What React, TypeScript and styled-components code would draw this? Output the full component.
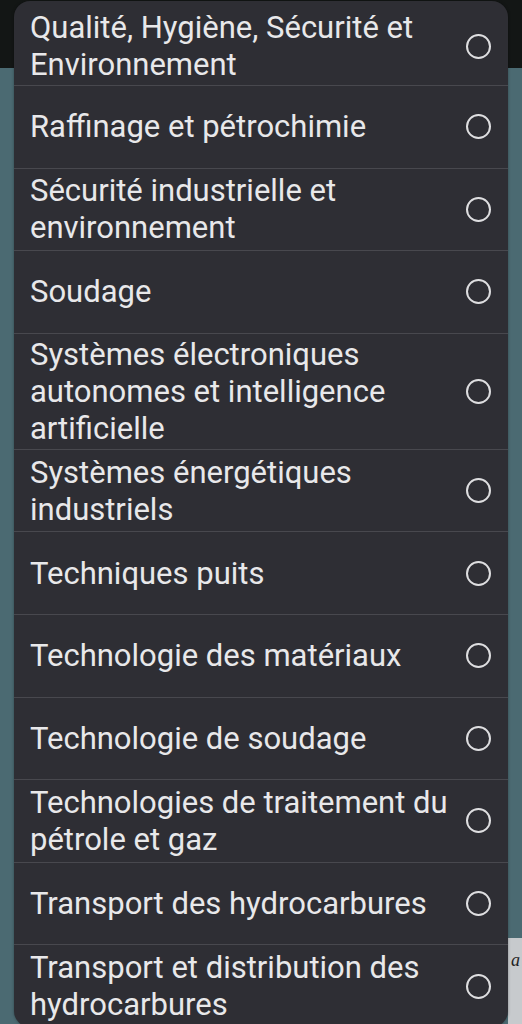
import React from "react";
import styled, { createGlobalStyle } from "styled-components";

const Global = createGlobalStyle`
  html, body { margin: 0; padding: 0; }
  body {
    width: 522px;
    height: 1024px;
    overflow: hidden;
    font-family: Roboto, "Noto Sans", "Liberation Sans", sans-serif;
    background:
      linear-gradient(#131615, #131615) left top / 100% 68px no-repeat,
      linear-gradient(#c7cacd, #c7cacd) right bottom / 14px 86px no-repeat,
      #4b6a72;
  }
`;

const Page = styled.div`
  position: relative;
  width: 522px;
  height: 1024px;
  padding: 1px 14px 0 14px;
  box-sizing: border-box;
`;

const Panel = styled.ul`
  list-style: none;
  margin: 0;
  padding: 0;
  background: #2e2e34;
  border-radius: 16px;
  overflow: hidden;
  box-shadow: 0 0 3px rgba(0, 0, 0, 0.35);
`;

const Row = styled.li<{ $first?: boolean }>`
  display: flex;
  align-items: center;
  justify-content: space-between;
  min-height: ${(p) => (p.$first ? "84px" : "82.6px")};
  padding: ${(p) => (p.$first ? "6px 16px 0 16px" : "2px 16px")};
  box-sizing: border-box;
  border-top: ${(p) => (p.$first ? "none" : "1px solid #48484e")};
`;

const Label = styled.span`
  flex: 1;
  color: #e8e8ea;
  font-size: 31px;
  line-height: 37px;
  letter-spacing: 0;
  padding-right: 8px;
`;

const Radio = styled.span`
  flex: none;
  width: 21px;
  height: 21px;
  border: 2.5px solid #dedee0;
  border-radius: 50%;
  margin-right: 1px;
`;

const Scribble = styled.span`
  position: absolute;
  right: 2px;
  top: 950px;
  font-family: "Liberation Serif", serif;
  font-style: italic;
  font-size: 18px;
  color: #222;
`;

const items = [
  "Qualité, Hygiène, Sécurité et Environnement",
  "Raffinage et pétrochimie",
  "Sécurité industrielle et environnement",
  "Soudage",
  "Systèmes électroniques autonomes et intelligence artificielle",
  "Systèmes énergétiques industriels",
  "Techniques puits",
  "Technologie des matériaux",
  "Technologie de soudage",
  "Technologies de traitement du pétrole et gaz",
  "Transport des hydrocarbures",
  "Transport et distribution des hydrocarbures",
];

export default function App() {
  return (
    <>
      <Global />
      <Page>
        <Scribble>a</Scribble>
        <Panel>
          {items.map((t, i) => (
            <Row key={t} $first={i === 0}>
              <Label>{t}</Label>
              <Radio />
            </Row>
          ))}
        </Panel>
      </Page>
    </>
  );
}
